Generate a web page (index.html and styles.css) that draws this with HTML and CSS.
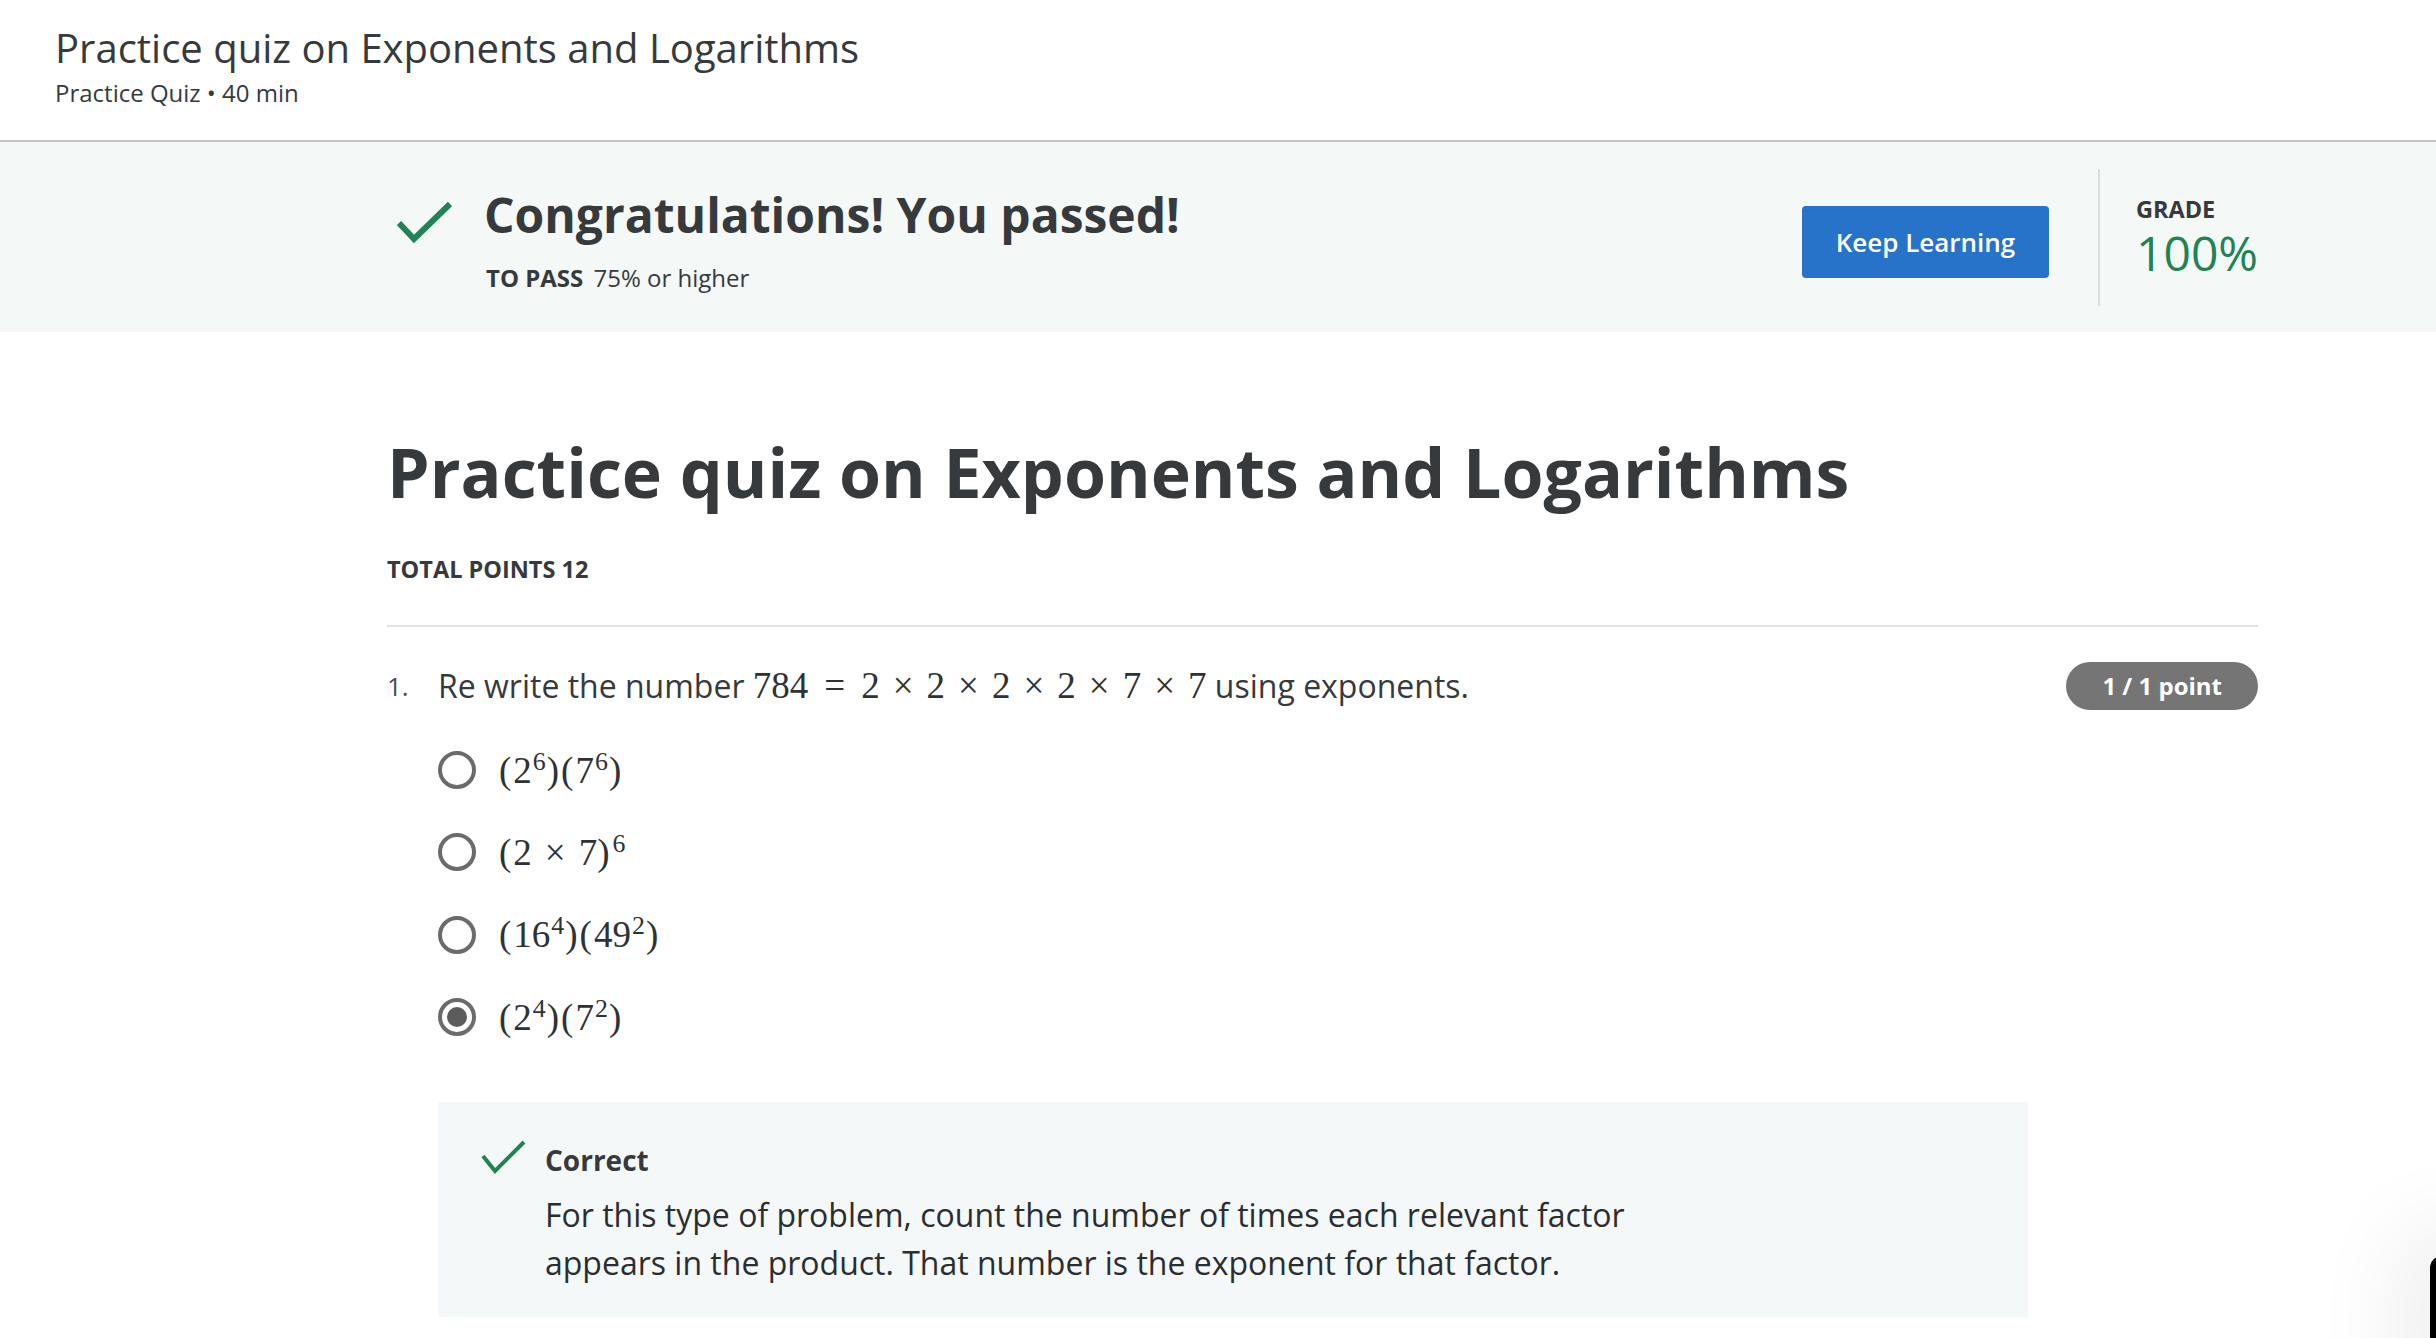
FILE: index.html
```html
<!DOCTYPE html>
<html lang="en">
<head>
<meta charset="utf-8">
<title>Practice quiz on Exponents and Logarithms</title>
<link rel="stylesheet" href="styles.css">
</head>
<body>
<header class="top">
  <h1 class="top-title">Practice quiz on Exponents and Logarithms</h1>
  <div class="top-meta">Practice Quiz • 40 min</div>
</header>

<section class="banner">
  <div class="banner-inner">
    <div class="pass">
      <div class="pass-icon">
        <svg class="pass-check" width="56" height="44" viewBox="0 0 56 44"><polyline points="3,23 18,39 54,4" fill="none" stroke="#1f8354" stroke-width="6"/></svg>
      </div>
      <div class="pass-text">
        <h2 class="pass-title">Congratulations! You passed!</h2>
        <p class="pass-req"><span class="pass-label">TO PASS</span> 75% or higher</p>
      </div>
    </div>
    <button class="btn">Keep Learning</button>
    <div class="divider"></div>
    <div class="grade">
      <div class="grade-label">GRADE</div>
      <div class="grade-value">100%</div>
    </div>
  </div>
</section>

<main class="content">
  <h1 class="quiz-title">Practice quiz on Exponents and Logarithms</h1>
  <div class="total">TOTAL POINTS 12</div>
  <div class="rule"></div>

  <div class="question">
    <div class="qnum">1.</div>
    <div class="qtext">Re write the number <span class="m">784<span class="rel">=</span>2<span class="bin">×</span>2<span class="bin">×</span>2<span class="bin">×</span>2<span class="bin">×</span>7<span class="bin">×</span>7</span> using exponents.</div>
    <div class="badge">1 / 1 point</div>
  </div>

  <ul class="options">
    <li class="option"><span class="radio"></span><span class="m"><span class="p">(</span>2<sup>6</sup><span class="p">)(</span>7<sup>6</sup><span class="p">)</span></span></li>
    <li class="option"><span class="radio"></span><span class="m"><span class="p">(</span>2<span class="bin">×</span>7<span class="p">)</span><sup>6</sup></span></li>
    <li class="option"><span class="radio"></span><span class="m"><span class="p">(</span>16<sup>4</sup><span class="p">)(</span>49<sup>2</sup><span class="p">)</span></span></li>
    <li class="option"><span class="radio radio-on"></span><span class="m"><span class="p">(</span>2<sup>4</sup><span class="p">)(</span>7<sup>2</sup><span class="p">)</span></span></li>
  </ul>

  <div class="feedback">
    <div class="fb-icon">
      <svg width="46" height="36" viewBox="0 0 46 36"><polyline points="3,17 15,32 44,3" fill="none" stroke="#1f8354" stroke-width="4"/></svg>
    </div>
    <div class="fb-body">
      <div class="fb-title">Correct</div>
      <p class="fb-text">For this type of problem, count the number of times each relevant factor appears in the product. That number is the exponent for that factor.</p>
    </div>
  </div>
</main>

<div class="widget"></div>
</body>
</html>
```

FILE: styles.css
```css
* { box-sizing: border-box; }

html, body {
  margin: 0;
  padding: 0;
  background: #ffffff;
}

body {
  font-family: "Open Sans", "Liberation Sans", sans-serif;
  color: #373a3c;
  overflow: hidden;
}

/* ---------- top header ---------- */
.top {
  padding: 26px 0 32px 55px;
  border-bottom: 2px solid #c2c4c4;
}

.top-title {
  margin: 0;
  font-size: 40px;
  line-height: 44px;
  font-weight: 400;
  color: #373a3c;
}

.top-meta {
  margin-top: 8px;
  font-size: 24px;
  line-height: 30px;
  color: #373a3c;
}

/* ---------- banner ---------- */
.banner {
  background: #f4f8f7;
  padding: 27px 0 26px;
}

.banner-inner {
  margin-left: 387px;
  width: 1871px;
  display: flex;
  align-items: center;
}

.pass {
  display: flex;
  margin-top: 5px;
}

.pass-icon {
  width: 97px;
  flex: none;
}

.pass-check {
  display: block;
  margin-left: 9px;
  margin-top: 13px;
}

.pass-title {
  margin: 0;
  font-size: 48px;
  line-height: 56px;
  font-weight: 700;
  color: #373a3c;
}

.pass-req {
  margin: 20px 0 0 2px;
  font-size: 24px;
  line-height: 30px;
}

.pass-label {
  font-weight: 700;
  margin-right: 4px;
}

.btn {
  margin-left: auto;
  margin-top: 9px;
  width: 247px;
  height: 72px;
  border: none;
  border-radius: 4px;
  background: #2673c9;
  color: #ffffff;
  font-family: "Open Sans", "Liberation Sans", sans-serif;
  font-size: 26px;
  font-weight: 600;
  padding: 0;
}

.divider {
  width: 2px;
  height: 137px;
  background: #dcdedd;
  margin: 0 36px 0 49px;
}

.grade {
  display: flex;
  flex-direction: column;
}

.grade-label {
  font-size: 23.5px;
  line-height: 28px;
  font-weight: 700;
}

.grade-value {
  margin-top: 2px;
  font-size: 48px;
  line-height: 56px;
  font-weight: 400;
  color: #1f8354;
}

/* ---------- main content ---------- */
.content {
  margin-left: 387px;
  width: 1871px;
}

.quiz-title {
  margin: 98px 0 0;
  font-size: 68px;
  line-height: 84px;
  font-weight: 700;
  color: #373a3c;
}

.total {
  margin-top: 40px;
  font-size: 23.5px;
  line-height: 30px;
  font-weight: 700;
}

.rule {
  margin-top: 41px;
  height: 2px;
  background: #e1e1e1;
}

.question {
  margin-top: 35px;
  display: flex;
  align-items: center;
  height: 48px;
}

.qnum {
  width: 51px;
  flex: none;
  font-size: 26px;
  line-height: 48px;
  color: #4a4d4f;
}

.qtext {
  flex: 1;
  font-size: 32px;
  line-height: 48px;
}

.m {
  font-family: "Liberation Serif", "Times New Roman", serif;
  font-size: 37px;
  white-space: nowrap;
  color: #2f3234;
}

.m .rel { margin: 0 16px; }
.m .bin { margin: 0 13px; }
.m .p { letter-spacing: 2px; }

.m sup {
  font-size: 0.7em;
  line-height: 0;
  vertical-align: 0.5em;
  margin-left: 1px;
  margin-right: 1px;
}

.badge {
  flex: none;
  height: 48px;
  line-height: 48px;
  padding: 0 36px;
  border-radius: 24px;
  background: #757575;
  color: #ffffff;
  font-size: 24px;
  font-weight: 700;
}

.options {
  list-style: none;
  margin: 19px 0 0;
  padding: 0 0 0 51px;
}

.option {
  height: 82.3px;
  display: flex;
  align-items: center;
}

.radio {
  width: 38px;
  height: 38px;
  border: 4px solid #6b6b6b;
  border-radius: 50%;
  margin-right: 23px;
  flex: none;
  display: flex;
  align-items: center;
  justify-content: center;
}

.radio-on::after {
  content: "";
  width: 20px;
  height: 20px;
  border-radius: 50%;
  background: #5c5c5c;
}

.feedback {
  margin: 44px 0 0 51px;
  width: 1590px;
  background: #f5f8f8;
  padding: 40px 0 30px 42px;
  display: flex;
}

.fb-icon {
  width: 65px;
  flex: none;
}

.fb-icon svg {
  display: block;
  margin-top: -3px;
}

.fb-title {
  font-size: 28px;
  line-height: 36px;
  font-weight: 700;
}

.fb-text {
  margin: 13px 0 0;
  max-width: 1140px;
  font-size: 32px;
  line-height: 48px;
  color: #2b2e30;
}

/* ---------- floating widget at the corner ---------- */
.widget {
  position: fixed;
  left: 2430px;
  top: 1256px;
  width: 40px;
  height: 120px;
  background: #000000;
  border-radius: 12px 0 0 0;
  box-shadow: 0 0 90px 30px rgba(0, 0, 0, 0.07);
}
```
